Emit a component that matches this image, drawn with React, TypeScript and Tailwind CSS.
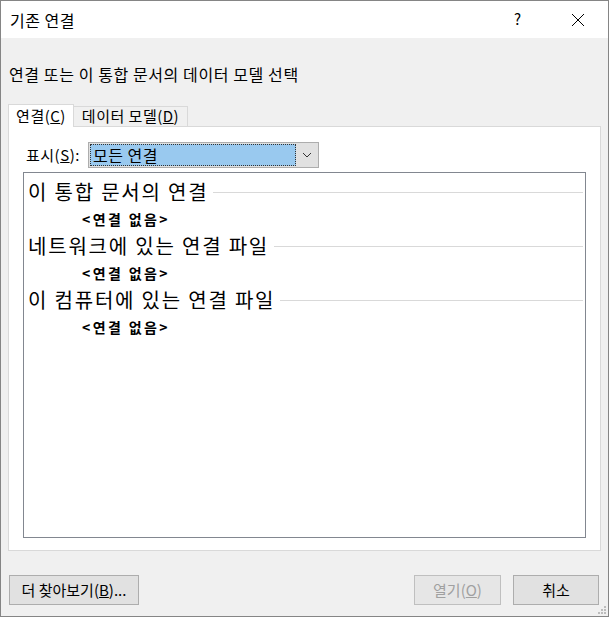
const font = { fontFamily: '"Noto Sans CJK KR", "Noto Sans", sans-serif' };

function Section({ title }: { title: string }) {
  return (
    <div>
      <div className="flex items-center h-[28px]">
        <span className="text-[20px] tracking-[1.8px] text-black whitespace-nowrap leading-none">{title}</span>
        <div className="flex-1 h-px bg-[#d9d9d9] ml-[5px] mr-[2px]" />
      </div>
      <div className="h-[26px] flex items-center pl-[54px] text-[14px] tracking-[2.4px] font-bold text-black">
        &lt;연결 없음&gt;
      </div>
    </div>
  );
}

function Button({ children, disabled, className }: { children: React.ReactNode; disabled?: boolean; className?: string }) {
  return (
    <button
      className={
        "h-[30px] border text-[15px] flex items-center justify-center " +
        (disabled ? "text-[#a0a0a0] border-[#bfbfbf] bg-[#e6e6e6] " : "text-black border-[#adadad] bg-[#e1e1e1] ") +
        (className ?? "")
      }
    >
      {children}
    </button>
  );
}

export default function App() {
  return (
    <div style={font} className="w-[609px] h-[617px] flex flex-col border border-[#858585] bg-[#f0f0f0] overflow-hidden">
      {/* title bar */}
      <div className="h-[37px] bg-white flex items-center shrink-0">
        <span className="pl-[9px] text-[16px] tracking-[0.5px] text-black">기존 연결</span>
        <span className="ml-auto mr-[50px] text-[15px] text-black">?</span>
        <svg width="14" height="14" viewBox="0 0 14 14" className="mr-[23px]">
          <path d="M1 1L13 13M13 1L1 13" stroke="#000" strokeWidth="1" />
        </svg>
      </div>

      <div className="flex-1 flex flex-col px-[7px]">
        <div className="mt-[26px] pl-[1px] text-[16px] tracking-[0.6px] text-black leading-[20px]">
          연결 또는 이 통합 문서의 데이터 모델 선택
        </div>

        {/* tabs */}
        <div className="mt-[19px] flex items-end h-[23px]">
          <div className="h-[23px] w-[66px] bg-white border border-[#d9d9d9] border-b-0 text-[15px] tracking-[0.5px] flex items-center justify-center relative z-10 -mb-px">
            연결(<span className="underline">C</span>)
          </div>
          <div className="h-[20px] w-[114px] bg-[#f0f0f0] border border-[#d9d9d9] border-l-0 border-b-0 text-[15px] tracking-[0.5px] flex items-center justify-center">
            데이터 모델(<span className="underline">D</span>)
          </div>
        </div>

        {/* panel */}
        <div className="h-[425px] bg-white border border-[#d9d9d9] flex flex-col px-[14px]">
          <div className="mt-[15px] flex items-center">
            <span className="text-[15px] tracking-[0.5px] text-black ml-[3px] w-[62px]">
              표시(<span className="underline">S</span>):
            </span>
            <div className="w-[231px] h-[26px] border border-[#adadad] bg-[#e1e1e1] flex p-[1px]">
              <div className="flex-1 bg-[#99c9ef] border border-dotted border-[#333] text-[16px] tracking-[0.5px] flex items-center pl-[2px]">
                모든 연결
              </div>
              <div className="w-[21px] flex items-center justify-center">
                <svg width="10" height="6" viewBox="0 0 10 6">
                  <path d="M1 1L5 5L9 1" stroke="#333" strokeWidth="1" fill="none" />
                </svg>
              </div>
            </div>
          </div>

          <div className="mt-[4px] h-[366px] border border-[#828790] bg-white pl-[4px] pt-[5px]">
            <Section title="이 통합 문서의 연결" />
            <Section title="네트워크에 있는 연결 파일" />
            <Section title="이 컴퓨터에 있는 연결 파일" />
          </div>
        </div>

        {/* buttons */}
        <div className="mt-[24px] flex items-center">
          <Button className="w-[130px] ml-[1px]">
            더 찾아보기(<span className="underline">B</span>)...
          </Button>
          <Button disabled className="w-[87px] ml-auto">
            열기(<span className="underline">O</span>)
          </Button>
          <Button className="w-[86px] ml-[12px] mr-[2px]">취소</Button>
        </div>
      </div>

      {/* resize grip */}
      <div className="relative h-0">
        <svg width="10" height="10" viewBox="0 0 10 10" className="absolute right-[1px] bottom-[1px]">
          <rect x="7" y="1" width="2" height="2" fill="#bcbcbc" />
          <rect x="4" y="4" width="2" height="2" fill="#bcbcbc" />
          <rect x="7" y="4" width="2" height="2" fill="#bcbcbc" />
          <rect x="1" y="7" width="2" height="2" fill="#bcbcbc" />
          <rect x="4" y="7" width="2" height="2" fill="#bcbcbc" />
          <rect x="7" y="7" width="2" height="2" fill="#bcbcbc" />
        </svg>
      </div>
    </div>
  );
}
